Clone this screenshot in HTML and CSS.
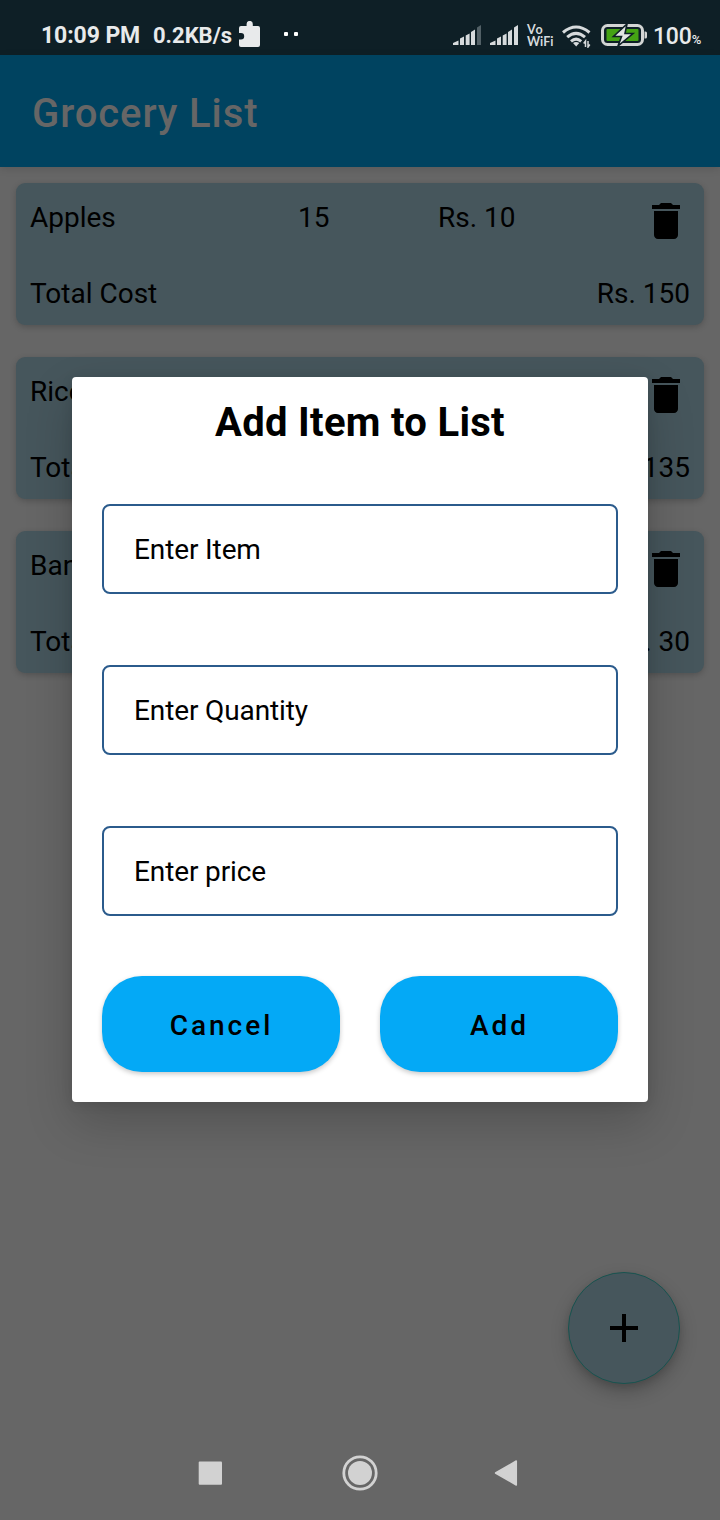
FILE: index.html
```html
<!DOCTYPE html>
<html lang="en">
<head>
<meta charset="utf-8">
<title>Grocery List</title>
<link rel="stylesheet" href="styles.css">
</head>
<body>
<div class="screen">
  <header class="status">
    <span class="clock">10:09 PM</span>
    <span class="speed">0.2KB/s</span>
    <svg class="puzzle" width="22" height="27" viewBox="0 0 22 27"><path fill="#e8eaeb" d="M2 5H7.600V3a3.100 3.100 0 0 1 6.200 0V5H19q2 0 2 2V24q0 2-2 2H2q-2 0-2-2V18.500H2a3.200 3.200 0 0 0 0-6.400H0V7q0-2 2-2z"/></svg>
    <svg class="dots" width="16" height="6" viewBox="0 0 16 6"><rect y="1" width="4" height="4" rx="1" fill="#fff"/><rect x="10" y="1" width="4" height="4" rx="1" fill="#fff"/></svg>
    <div class="status-right">
      <svg class="signal" width="29" height="21" viewBox="0 0 29 21" fill="#d6dadc"><path d="M0 20v-2l5.500-2.500V20zM7 20v-6.500l4-2V20zM12.700 20v-9.500l3.900-2V20zM18 20V7l4-2.500V20z"/><path fill="#526066" d="M24 20V2.500L28 0v20z"/></svg>
      <svg class="signal second" width="29" height="21" viewBox="0 0 29 21" fill="#d6dadc"><path d="M0 20v-2l5.500-2.500V20zM7 20v-6.500l4-2V20zM12.700 20v-9.500l3.900-2V20zM18 20V7l4-2.500V20zM24 20V2.500L28 0v20z"/></svg>
      <div class="vowifi"><span class="vo">Vo</span><span>WiFi</span></div>
      <svg class="wifi" width="29" height="23" viewBox="0 0 29 23" fill="none" stroke="#d6dadc" stroke-width="3"><path d="M1 7.500Q14 -3.500 27.500 7.500M5.200 12.200Q14 4.500 23 12.200M9 16.300Q14 12 19.200 16.300"/><path fill="#d6dadc" stroke="none" d="M11 18q3-2 6.300 0L14.200 21.500z"/><path stroke-width="1.500" d="M23.500 22v-6l-1.800 2.500M26 16v6l1.800-2.500"/></svg>
      <svg class="battery" width="46" height="22" viewBox="0 0 46 22"><rect x="1.500" y="1.500" width="40" height="19" rx="5" fill="none" stroke="#d3d5d4" stroke-width="3"/><rect x="5.500" y="5" width="32" height="12" rx="1" fill="#45a314"/><path fill="#d3d5d4" d="M43.500 7.500h1q1.500 0 1.500 1.500v4q0 1.500-1.500 1.500h-1z"/><path d="M26 0L12.500 12.500h8L17 22 32 9.500H24z" fill="#e2e4e3" stroke="#0e1f26" stroke-width="1.600"/></svg>
      <span class="percent">100<small>%</small></span>
    </div>
  </header>
  <div class="appbar">Grocery List</div>
  <main class="list">
    <section class="card">
      <div class="row"><span>Apples</span><span>15</span><span>Rs. 10</span>
        <svg class="trash" width="28" height="36" viewBox="5 3 14 18"><path d="M6 19c0 1.100.9 2 2 2h8c1.100 0 2-.9 2-2V7H6v12zM19 4h-3.500l-1-1h-5l-1 1H5v2h14V4z"/></svg></div>
      <div class="row"><span>Total Cost</span><span class="total">Rs. 150</span></div>
    </section>
    <section class="card">
      <div class="row"><span>Rice</span><span></span><span></span>
        <svg class="trash" width="28" height="36" viewBox="5 3 14 18"><path d="M6 19c0 1.100.9 2 2 2h8c1.100 0 2-.9 2-2V7H6v12zM19 4h-3.500l-1-1h-5l-1 1H5v2h14V4z"/></svg></div>
      <div class="row"><span>Total Cost</span><span class="total">Rs. 135</span></div>
    </section>
    <section class="card">
      <div class="row"><span>Banana</span><span></span><span></span>
        <svg class="trash" width="28" height="36" viewBox="5 3 14 18"><path d="M6 19c0 1.100.9 2 2 2h8c1.100 0 2-.9 2-2V7H6v12zM19 4h-3.500l-1-1h-5l-1 1H5v2h14V4z"/></svg></div>
      <div class="row"><span>Total Cost</span><span class="total">Rs. 30</span></div>
    </section>
  </main>
  <nav class="nav">
    <svg width="24" height="24" viewBox="0 0 24 24"><rect x=".7" y=".5" width="23.300" height="23.300" rx="1" fill="#d2d2d2"/></svg>
    <svg class="home" width="36" height="36" viewBox="0 0 36 36"><circle cx="18" cy="18" r="16.200" fill="none" stroke="#d2d2d2" stroke-width="2.800"/><circle cx="18" cy="18" r="12" fill="#d2d2d2"/></svg>
    <svg class="back" width="24" height="28" viewBox="0 0 24 28"><path fill="#d2d2d2" stroke="#d2d2d2" stroke-width="1.500" stroke-linejoin="round" d="M1.500 14L22.300 2v24z"/></svg>
  </nav>
  <div class="fab"><svg width="28" height="28" viewBox="0 0 28 28"><path d="M12 0h4v12h12v4H16v12h-4V16H0v-4h12z"/></svg></div>
  <div class="dialog">
    <h1 class="dialog-title">Add Item to List</h1>
    <div class="fields">
      <div class="field">Enter Item</div>
      <div class="field">Enter Quantity</div>
      <div class="field">Enter price</div>
    </div>
    <div class="actions">
      <div class="button">Cancel</div>
      <div class="button">Add</div>
    </div>
  </div>
</div>
</body>
</html>
```
FILE: styles.css
```css
* { box-sizing: border-box; }
body { margin: 0; font-family: Roboto, sans-serif; color: #000; }
svg { display: block; flex: none; }
.screen { position: relative; width: 720px; height: 1520px; background: #666; overflow: hidden; display: flex; flex-direction: column; }
.status { height: 55px; background: #0e1f26; display: flex; align-items: flex-start; padding: 21px 19px 0 41px; color: #e8eaeb; font-size: 23px; line-height: 28px; font-weight: 700; white-space: nowrap; }
.clock { width: 112px; padding-top: 1px; letter-spacing: -.1px; }
.speed { width: 86px; padding-top: 1px; font-size: 22px; }
.dots { margin: 10px 0 0 23px; }
.status-right { display: flex; margin-left: auto; }
.signal { margin-top: 4px; }
.second { margin-left: 8px; }
.vowifi { display: flex; flex-direction: column; margin: 3px 0 0 8px; width: 27px; font-family: Lato, sans-serif; font-size: 12.500px; line-height: 12px; font-weight: 700; color: #d6dadc; }
.vo { letter-spacing: .8px; }
.wifi { margin: 4px 0 0 8px; }
.battery { margin: 3px 0 0 10px; }
.percent { margin-left: 6px; padding-top: 2px; width: 48px; font-size: 23px; font-weight: 500; letter-spacing: -.2px; }
.percent small { font-size: 13px; }
.appbar { position: relative; height: 112px; background: #004360; color: #666; padding: 35px 32px; font-size: 40px; line-height: 47px; font-weight: 500; letter-spacing: .9px; box-shadow: 0 2px 8px rgba(0,0,0,.12); }
.list { flex: 1; padding: 16px; display: flex; flex-direction: column; gap: 32px; }
.card { height: 142px; padding: 18px 14px 0 14px; border-radius: 9px; background: #46565c; box-shadow: 0 2px 6px rgba(0,0,0,.2); display: flex; flex-direction: column; gap: 43px; }
.row { display: grid; grid-template-columns: 268px 140px 1fr auto; height: 33px; font-size: 28px; line-height: 33px; }
.trash { margin: 2px 10px 0 0; }
.total { grid-column: 2 / 5; text-align: right; }
.nav { height: 96px; display: flex; align-items: center; padding: 1px 0 0 198px; }
.home { margin-left: 120px; }
.back { margin-left: 116px; }
.fab { position: absolute; left: 568px; top: 1272px; width: 112px; height: 112px; border: 1.500px solid #18534f; border-radius: 50%; background: #46565c; box-shadow: 0 8px 18px rgba(0,0,0,.22), 0 3px 6px rgba(0,0,0,.1); display: flex; align-items: center; justify-content: center; }
.dialog { position: absolute; left: 72px; top: 377px; width: 576px; height: 725px; padding: 22px 30px 30px; border-radius: 4px; background: #fff; box-shadow: 0 20px 48px rgba(0,0,0,.2), 0 2px 12px rgba(0,0,0,.1); }
.dialog-title { margin: 0 0 58px; text-align: center; font-size: 40px; line-height: 47px; font-weight: 700; letter-spacing: .3px; }
.fields { display: flex; flex-direction: column; gap: 71px; }
.field { height: 90px; padding: 27px 30px; border: 2px solid #2b5b8c; border-radius: 8px; font-size: 28px; line-height: 33px; letter-spacing: -.12px; }
.actions { display: flex; gap: 40px; margin-top: 60px; }
.button { flex: 1; height: 96px; padding-left: 1px; border-radius: 40px; background: #04a9f6; box-shadow: 0 2px 5px rgba(0,0,0,.22); text-align: center; font-size: 28px; line-height: 100px; font-weight: 500; letter-spacing: 3px; }
```
